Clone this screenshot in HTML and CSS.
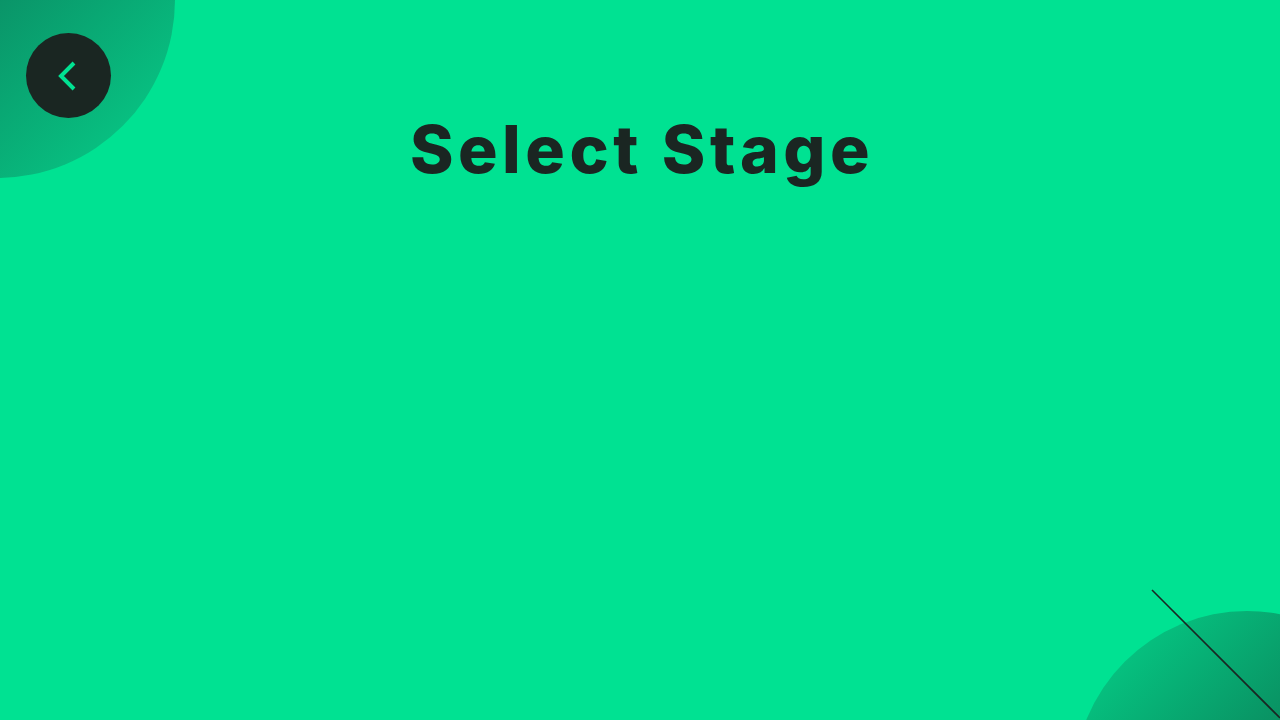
FILE: index.html
```html
<!DOCTYPE html>
<html lang="en">
<head>
<meta charset="utf-8">
<title>Select Stage</title>
<link rel="stylesheet" href="styles.css">
</head>
<body>
<div class="screen">
  <div class="blob blob-top"></div>
  <div class="blob blob-bottom"></div>
  <svg class="slash" width="130" height="130" viewBox="0 0 130 130"><line x1="1" y1="1" x2="129" y2="129" stroke="#1a2622" stroke-width="1.6"/></svg>
  <header class="header">
    <button class="back" aria-label="Back">
      <svg width="24" height="34" viewBox="0 0 24 34"><polyline points="17,4 4,17 17,30" fill="none" stroke="#00e292" stroke-width="4" stroke-linecap="butt" stroke-linejoin="miter"/></svg>
    </button>
    <h1 class="title">Select Stage</h1>
  </header>
</div>
</body>
</html>
```
FILE: styles.css
```css
html, body {
  margin: 0;
  padding: 0;
  width: 1280px;
  height: 720px;
  overflow: hidden;
  background: #00e292;
}
.screen {
  position: relative;
  width: 1280px;
  height: 720px;
  overflow: hidden;
  font-family: "Inter", "Noto Sans", sans-serif;
}
.blob {
  position: absolute;
  border-radius: 50%;
}
.blob-top {
  width: 356px;
  height: 356px;
  left: -181px;
  top: -178px;
  background: linear-gradient(135deg, #0a9468 50%, #07d08a 100%);
}
.blob-bottom {
  width: 346px;
  height: 346px;
  left: 1074px;
  top: 611px;
  background: linear-gradient(135deg, #04d68c 0%, #0a8a5e 50%);
}
.slash {
  position: absolute;
  left: 1151px;
  top: 589px;
}
.header {
  position: relative;
  display: flex;
  flex-direction: column;
  align-items: center;
  padding-top: 110px;
}
.back {
  position: absolute;
  left: 26px;
  top: 33px;
  width: 85px;
  height: 85px;
  border: none;
  border-radius: 50%;
  background: #1a2622;
  display: flex;
  align-items: center;
  justify-content: center;
  padding: 0;
}
.back svg { display: block; overflow: visible; }
.title {
  margin: 0;
  font-size: 66px;
  font-weight: 800;
  letter-spacing: 4.5px;
  color: #1a2622;
  line-height: 1.2;
  padding-left: 4px;
}
```
